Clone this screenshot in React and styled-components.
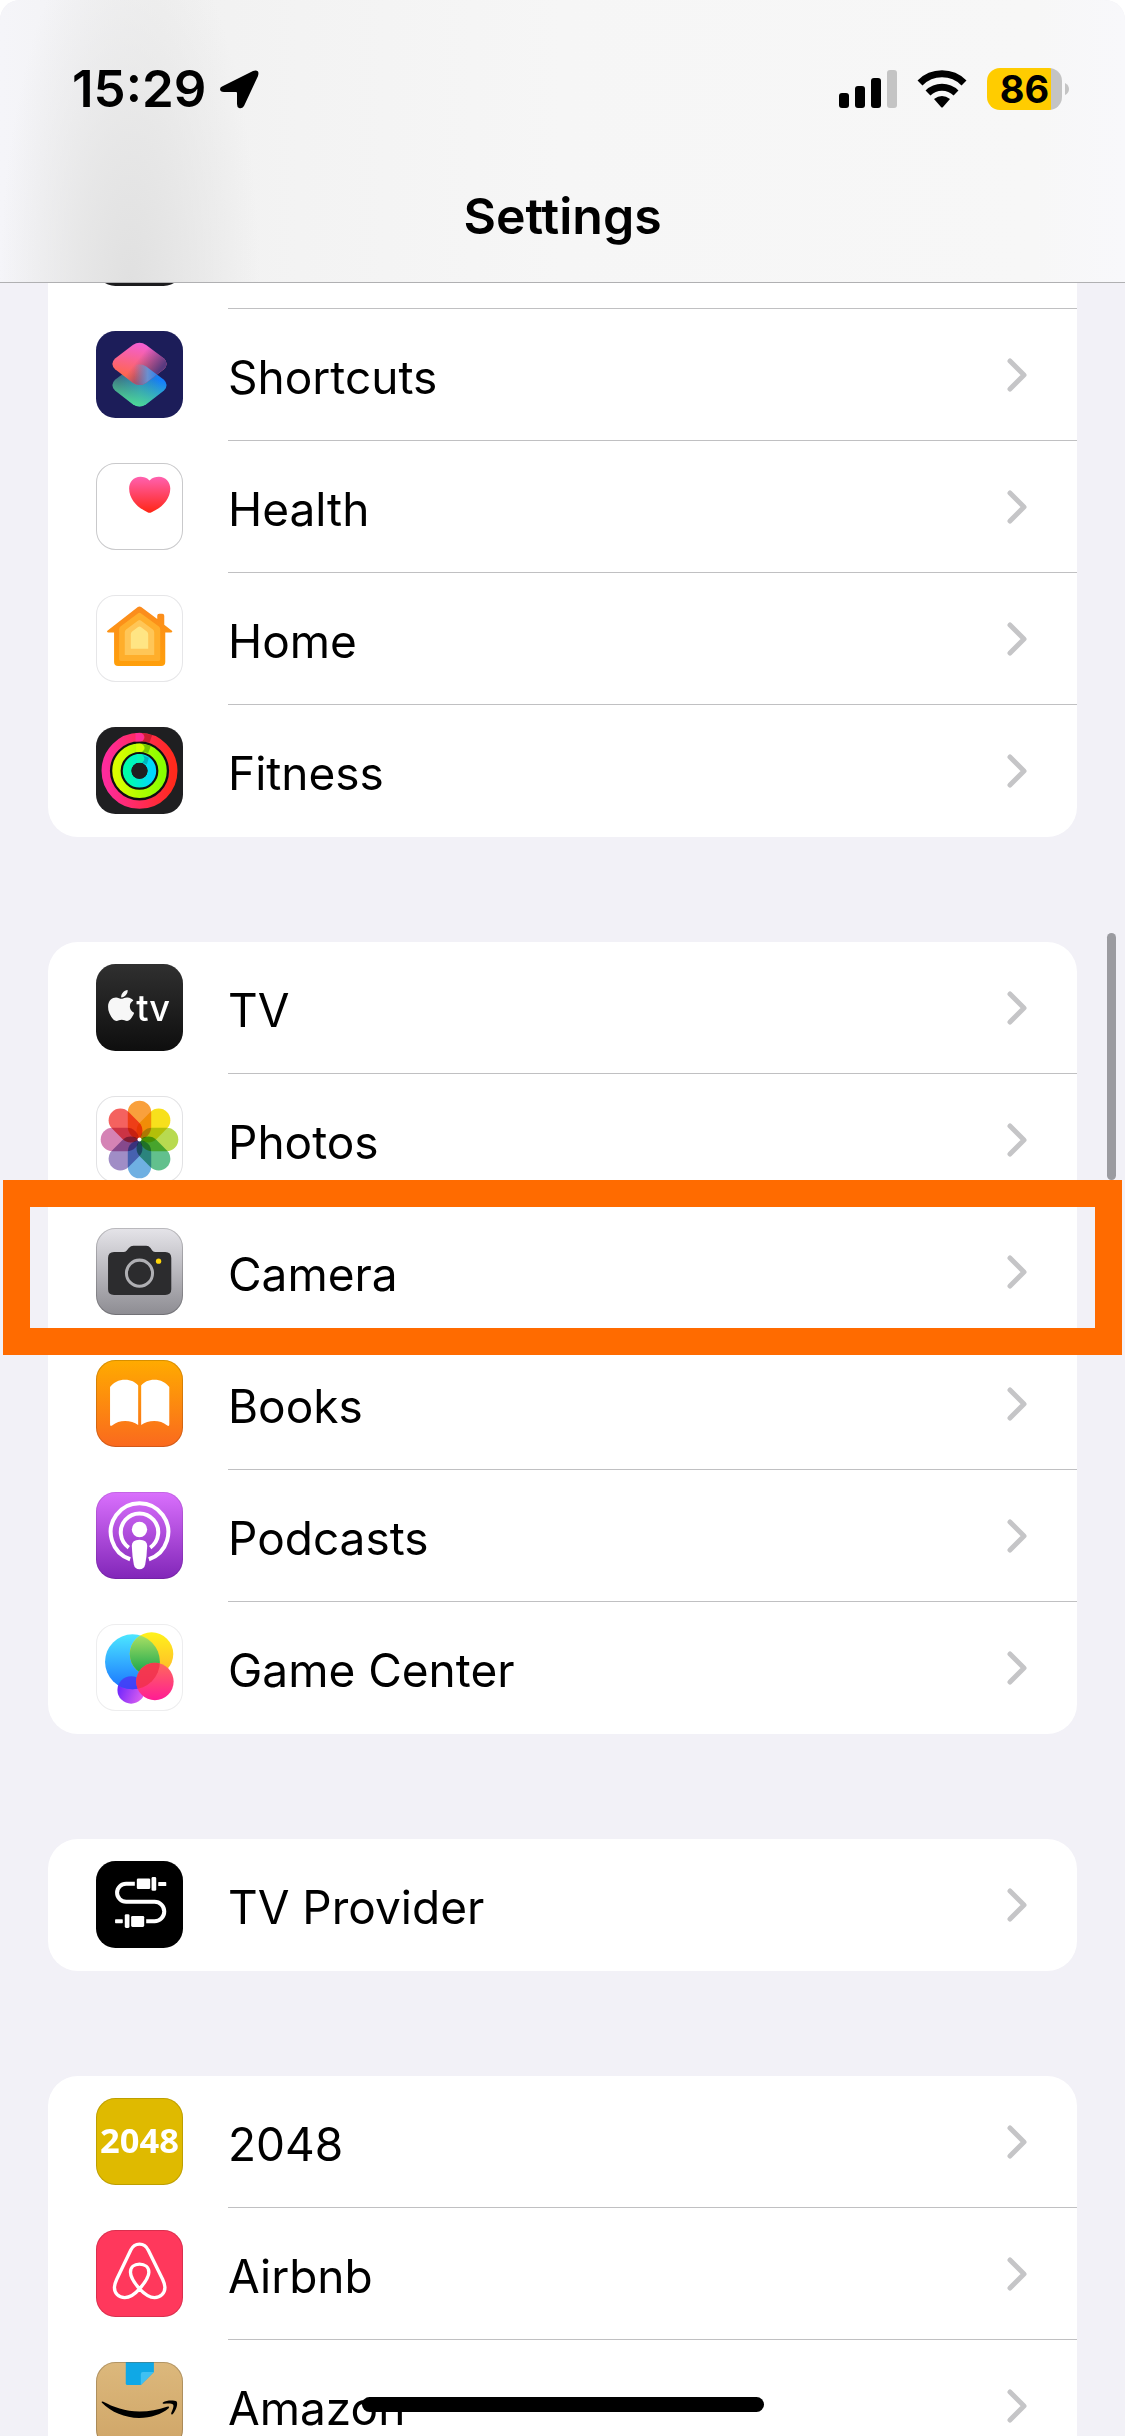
import React from 'react'
import styled, { createGlobalStyle } from 'styled-components'
import { FaApple } from 'react-icons/fa'

const AppIcon = styled.svg`
    width: 87px;
    height: 87px;
    margin-bottom: 1px;
    flex: none;`

const TileText = styled.text`
    fill: #ffffff;
    font-family: ${(props) => (props.$humanist ? '"Open Sans", "Noto Sans"' : 'Inter')}, sans-serif;`

const Petals = styled.g`
    isolation: isolate;

    rect {
        mix-blend-mode: multiply;
    }`

const photoPetals = ['#f9a03c', '#f7e01c', '#b8da50', '#62c08d', '#6fb0e2', '#a08dc6', '#d583b5', '#f4625f']

function Tile({ fill, edge, children }) {
    return (
        <AppIcon viewBox="0 0 260 260" aria-hidden="true">
            <rect width="260" height="260" rx="58" fill={fill} />
            {children}
            {edge && <rect x="1.5" y="1.5" width="257" height="257" rx="57" fill="none" stroke={edge} strokeWidth="3" />}
        </AppIcon>
    )
}

function Grad({ id, from, to, x2 = 0, y2 = 1 }) {
    return (
        <linearGradient id={id} x1="0" y1="0" x2={x2} y2={y2}>
            <stop offset="0" stopColor={from} />
            <stop offset="1" stopColor={to} />
        </linearGradient>
    )
}

const diamond = 'M110 42Q130 28 150 42L203 82Q219 98 203 114L150 155Q130 168 110 155L57 114Q41 98 57 82Z'

const icons = {
    dark: <Tile fill="#1c1c1e" />,
    shortcuts: (
        <Tile fill="#1c1d59">
            <defs>
                <linearGradient id="scLow" x1="0.1" y1="0.3" x2="0.9" y2="0.3">
                    <stop offset="0" stopColor="#38597f" />
                    <stop offset="0.5" stopColor="#2a82c0" />
                    <stop offset="1" stopColor="#147efb" />
                </linearGradient>
                <linearGradient id="scGreen" x1="0.4" y1="1" x2="0.6" y2="0.3">
                    <stop offset="0" stopColor="#4fdc95" />
                    <stop offset="1" stopColor="#4fdc95" stopOpacity="0" />
                </linearGradient>
                <linearGradient id="scTop" x1="0.35" y1="0.8" x2="0.55" y2="0.05">
                    <stop offset="0" stopColor="#ff6650" />
                    <stop offset="1" stopColor="#f35fd0" />
                </linearGradient>
                <linearGradient id="scFade" x1="0.5" y1="0.35" x2="0.9" y2="0.6">
                    <stop offset="0" stopColor="#5a3a80" stopOpacity="0" />
                    <stop offset="1" stopColor="#5a3a80" />
                </linearGradient>
                <linearGradient id="scBlue" x1="0.4" y1="0.5" x2="0.9" y2="0.5">
                    <stop offset="0" stopColor="#8f8fb4" stopOpacity="0" />
                    <stop offset="0.5" stopColor="#6a90d0" />
                    <stop offset="1" stopColor="#147efb" />
                </linearGradient>
                <clipPath id="scClip"><path d={diamond} transform="translate(0 64)" /></clipPath>
            </defs>
            <path d={diamond} transform="translate(0 64)" fill="url(#scLow)" />
            <path d={diamond} transform="translate(0 64)" fill="url(#scGreen)" />
            <path d={diamond} fill="url(#scTop)" />
            <path d={diamond} fill="url(#scFade)" />
            <g clipPath="url(#scClip)"><path d={diamond} fill="url(#scBlue)" /></g>
        </Tile>
    ),
    health: (
        <Tile fill="#fff" edge="#c9c9cb">
            <defs><Grad id="heart" from="#ff61b0" to="#ff2616" /></defs>
            <path d="M160 52C151 43 142 41 133 41C112 41 99 57 99 76C99 110 127 135 154 147Q160 150 166 147C194 135 222 110 222 76C222 57 208 41 188 41C178 41 169 43 160 52Z" fill="url(#heart)" />
        </Tile>
    ),
    home: (
        <Tile fill="#fff" edge="#e6e6e8">
            <defs><Grad id="house" from="#fb8b1e" to="#ff9f0a" /></defs>
            <path d="M125 36Q130 32 135 36L183 72V62Q183 56 189 56H198Q204 56 204 62V89L227 107Q230 112 224 112H207V200Q207 212 195 212H66Q54 212 54 200V112H37Q31 112 34 107Z" fill="url(#house)" />
            <path d="M125 55Q130 51 135 55L188 94Q192 97 192 102V192Q192 197 187 197H74Q69 197 69 192V102Q69 97 73 94Z" fill="#ffae2b" />
            <path d="M126 76Q130 73 134 76L170 103Q174 106 174 111V179H86V111Q86 106 90 103Z" fill="#ffc657" />
            <path d="M126 96Q130 93 134 96L152 109Q156 112 156 117V161H104V117Q104 112 108 109Z" fill="#ffe584" />
        </Tile>
    ),
    fitness: (
        <Tile fill="#1f1f21">
            <defs>
                <Grad id="move" from="#ff2b9c" to="#ff2a1c" x2="1" y2="0" />
                <Grad id="exercise" from="#dcff00" to="#88ff00" x2="1" y2="0" />
                <Grad id="stand" from="#00ffa8" to="#00d8ff" x2="1" y2="0" />
            </defs>
            <circle cx="130" cy="131" r="88" fill="#0f0f10" />
            <circle cx="130" cy="131" r="101" fill="none" stroke="url(#move)" strokeWidth="25" />
            <circle cx="130" cy="131" r="69" fill="none" stroke="url(#exercise)" strokeWidth="25" />
            <circle cx="130" cy="131" r="37" fill="none" stroke="url(#stand)" strokeWidth="26" />
            <circle cx="130" cy="131" r="24" fill="#1f1f21" />
            <path d="M136 18Q154 30 138 43L160 46L168 24Z" fill="#8c0f10" opacity="0.45" />
            <path d="M136 50Q154 62 138 74L156 78L164 56Z" fill="#3a7a00" opacity="0.45" />
            <path d="M136 83Q152 94 138 106L152 112L158 92Z" fill="#00707c" opacity="0.4" />
            <path d="M118 18H131A12 12 0 0 1 131 43H118Z" fill="#ff2d92" />
            <path d="M120 50H131A12 12 0 0 1 131 75H120Z" fill="#d4ff00" />
            <path d="M122 81H131A12 12 0 0 1 131 107H122Z" fill="#08f7b4" />
        </Tile>
    ),
    tv: (
        <Tile fill="url(#tvBg)">
            <defs><Grad id="tvBg" from="#303030" to="#0e0e0e" /></defs>
            <FaApple x="22" y="71" size="106" color="#f7f7f7" />
            <TileText x="120" y="170" fontSize="108" fontWeight="500">tv</TileText>
        </Tile>
    ),
    photos: (
        <Tile fill="#fff" edge="#e2e2e4">
            <Petals>
                {photoPetals.map((color, i) => (
                    <rect key={color} x="95" y="14" width="70" height="114" rx="35" fill={color} transform={`rotate(${i * 45} 130 130)`} />
                ))}
            </Petals>
            <circle cx="130" cy="130" r="6" fill="#fff" />
        </Tile>
    ),
    camera: (
        <Tile fill="url(#camBg)" edge="#00000030">
            <defs><Grad id="camBg" from="#e5e4e9" to="#8d8c92" /></defs>
            <path d="M36 90Q36 72 54 72H82Q88 72 92 67L98 60Q104 53 112 53H150Q158 53 163 60L168 67Q172 72 178 72H207Q225 72 225 90V183Q225 200 207 200H54Q36 200 36 183Z" fill="#2c2c2e" />
            <circle cx="130" cy="135" r="39" fill="none" stroke="#afafb3" strokeWidth="9" />
            <circle cx="187" cy="99" r="8" fill="#ffd60a" />
        </Tile>
    ),
    books: (
        <Tile fill="url(#bookBg)" edge="#00000028">
            <defs><Grad id="bookBg" from="#ffab00" to="#fa691e" /></defs>
            <path d="M42 81C52 67 68 59 87 59C104 59 118 66 126 76V194C115 186 102 182 87 182C72 182 60 186 48 196Q42 199 42 193Z" fill="#fff" />
            <path d="M219 81C209 67 193 59 174 59C157 59 143 66 135 76V194C146 186 159 182 174 182C189 182 201 186 213 196Q219 199 219 193Z" fill="#fff" />
        </Tile>
    ),
    podcasts: (
        <Tile fill="url(#podBg)" edge="#00000018">
            <defs><Grad id="podBg" from="#da70fd" to="#8126b8" /></defs>
            <path d="M102 201A86 86 0 1 1 158 201" fill="none" stroke="#fff" strokeWidth="12" />
            <path d="M98 166A56 56 0 1 1 162 166" fill="none" stroke="#fff" strokeWidth="12" />
            <circle cx="130" cy="112" r="23" fill="#fff" />
            <path d="M107 161Q107 143 130 143Q153 143 153 161Q152 192 147 217Q144 231 130 231Q116 231 113 217Q108 192 107 161Z" fill="#fff" />
        </Tile>
    ),
    gameCenter: (
        <Tile fill="#fff" edge="#ededee">
            <defs>
                <Grad id="gcBlue" from="#4ce6ff" to="#1a74ff" />
                <Grad id="gcYellow" from="#fff21c" to="#ffb52a" />
                <Grad id="gcPink" from="#ff6a5a" to="#ff1c95" />
                <Grad id="gcPurple" from="#5a1cff" to="#d65bf0" x2="1" y2="0.4" />
                <Grad id="gcGreen" from="#b4e465" to="#0fa24c" />
                <clipPath id="gcClip"><circle cx="109" cy="113" r="82" /></clipPath>
            </defs>
            <circle cx="105" cy="197" r="41" fill="url(#gcPurple)" />
            <circle cx="109" cy="113" r="82" fill="url(#gcBlue)" />
            <g clipPath="url(#gcClip)"><circle cx="105" cy="197" r="41" fill="#4a35f5" opacity="0.8" /></g>
            <circle cx="166" cy="90" r="65" fill="url(#gcYellow)" />
            <g clipPath="url(#gcClip)"><circle cx="166" cy="90" r="65" fill="url(#gcGreen)" /></g>
            <circle cx="176" cy="172" r="56" fill="url(#gcPink)" />
            <g clipPath="url(#gcClip)"><circle cx="176" cy="172" r="56" fill="#f0304a" opacity="0.8" /></g>
        </Tile>
    ),
    provider: (
        <Tile fill="#000">
            <path d="M116 68H90A27 27 0 0 0 90 122H175A29 29 0 0 1 175 180H150" fill="none" stroke="#fff" strokeWidth="12" />
            <g fill="#fff">
                <rect x="122" y="52" width="40" height="32" rx="4" />
                <rect x="166" y="48" width="14" height="41" rx="4" />
                <rect x="186" y="63" width="24" height="12" rx="2" />
                <rect x="57" y="174" width="23" height="12" rx="2" />
                <rect x="86" y="159" width="14" height="41" rx="4" />
                <rect x="105" y="164" width="39" height="33" rx="4" />
            </g>
        </Tile>
    ),
    game2048: (
        <Tile fill="#dfba00" edge="#00000025">
            <TileText x="130" y="165" fontSize="103" fontWeight="700" textAnchor="middle" $humanist>2048</TileText>
        </Tile>
    ),
    airbnb: (
        <Tile fill="#ff385c" edge="#00000025">
            <path
                d="M130 176C112 155 103 141 103 126C103 111 114 102 130 102C146 102 158 111 158 126C158 141 148 155 130 176C116 192 102 202 86 202C67 202 55 189 55 171C55 163 57 158 62 147L104 60C110 47 118 42 130 42C142 42 150 47 156 60L199 147C204 158 206 163 206 171C206 189 193 202 175 202C158 202 145 192 130 176Z"
                fill="none" stroke="#fff" strokeWidth="10" strokeLinejoin="round"
            />
        </Tile>
    ),
    amazon: (
        <Tile fill="url(#amzBg)" edge="#00000030">
            <defs><Grad id="amzBg" from="#dcb87c" to="#cfa567" /></defs>
            <path d="M89 1H173V30L134 69H94Q89 69 89 64Z" fill="#0fa8e6" />
            <path d="M173 30L134 69V36Q134 30 140 30Z" fill="#3fc0f2" />
            <path d="M17 121Q16 117 22 119C50 134 88 148 130 148C160 148 186 143 212 134Q222 131 217 138C196 156 164 167 129 167C86 167 46 150 17 121Z" fill="#000" />
            <path d="M200 121C212 113 234 114 241 118C246 126 238 147 229 156Q223 159 225 152C229 143 234 131 230 127C226 123 213 124 204 125Q197 125 200 121Z" fill="#000" />
        </Tile>
    ),
}

const groups = [
    [
        { icon: 'dark', label: '' },
        { icon: 'shortcuts', label: 'Shortcuts' },
        { icon: 'health', label: 'Health' },
        { icon: 'home', label: 'Home' },
        { icon: 'fitness', label: 'Fitness' },
    ],
    [
        { icon: 'tv', label: 'TV' },
        { icon: 'photos', label: 'Photos' },
        { icon: 'camera', label: 'Camera', marked: true },
        { icon: 'books', label: 'Books' },
        { icon: 'podcasts', label: 'Podcasts' },
        { icon: 'gameCenter', label: 'Game Center' },
    ],
    [{ icon: 'provider', label: 'TV Provider' }],
    [
        { icon: 'game2048', label: '2048' },
        { icon: 'airbnb', label: 'Airbnb' },
        { icon: 'amazon', label: 'Amazon' },
    ],
]

function StatusBar() {
    return (
        <Status>
            <Clock>
                <time>15:29</time>
                <svg width="39" height="39" viewBox="0 0 39 39" aria-hidden="true">
                    <path d="M3 16L33 1Q40 -1 38 6L24 36Q22 39 19 38Q17 37 17 34V23Q17 22 16 22H4Q0 22 0 19Q0 17 3 16Z" fill="#000" />
                </svg>
            </Clock>
            <Indicators>
                <svg width="58" height="38" viewBox="0 0 58 38" aria-hidden="true">
                    <rect x="0" y="23" width="10" height="15" rx="3" />
                    <rect x="16" y="16" width="10" height="22" rx="3" />
                    <rect x="32" y="8" width="10" height="30" rx="3" />
                    <rect x="48" y="0" width="10" height="38" rx="3" fill="#c4c4c4" />
                </svg>
                <svg width="50" height="38" viewBox="0 0 50 38" aria-hidden="true">
                    <path d="M3 13A31 31 0 0 1 47 13" fill="none" stroke="#000" strokeWidth="7" />
                    <path d="M11 23A20 20 0 0 1 39 23" fill="none" stroke="#000" strokeWidth="7" />
                    <path d="M17 29Q25 23 33 29L26 37Q25 38 24 37Z" />
                </svg>
                <Battery>
                    <Charge>86</Charge>
                    <svg width="4" height="12" viewBox="0 0 4 12" aria-hidden="true">
                        <path d="M0 0Q4 2 4 6Q4 10 0 12Z" fill="#c4c4c4" />
                    </svg>
                </Battery>
            </Indicators>
        </Status>
    )
}

export default function App() {
    return (
        <Screen>
            <GlobalStyle />
            <Header>
                <StatusBar />
                <Title>Settings</Title>
            </Header>
            <List>
                {groups.map((rows, g) => (
                    <Group key={g}>
                        {rows.map((row) => (
                            <Item key={row.icon}>
                                <Row href="#">
                                    {icons[row.icon]}
                                    <Line>
                                        <Label>{row.label}</Label>
                                        <svg width="20" height="34" viewBox="0 0 20 34" aria-hidden="true">
                                            <path d="M3 3L17 17L3 31" fill="none" stroke="#c5c5c7" strokeWidth="5" strokeLinecap="round" strokeLinejoin="round" />
                                        </svg>
                                    </Line>
                                </Row>
                                {row.marked && <Marker />}
                            </Item>
                        ))}
                    </Group>
                ))}
            </List>
            <ScrollThumb />
            <HomeBar />
        </Screen>
    )
}

const GlobalStyle = createGlobalStyle`
    * {
        box-sizing: border-box;
    }
    body {
        margin: 0;
        background: #ffffff;
        color: #000000;
        font-family: Inter, Roboto, sans-serif;
    }`

const Screen = styled.div`
    position: relative;
    height: 100vh;
    overflow: hidden;
    background: #f2f1f7;
    border-radius: 20px 20px 0 0;`

const Header = styled.header`
    position: sticky;
    top: 0;
    z-index: 2;
    border-bottom: 1px solid #b0b0b2;
    background:
        radial-gradient(ellipse 130px 380px at 130px 290px, #e0e0e0 0%, rgba(228, 228, 228, 0.8) 40%, rgba(241, 241, 241, 0) 100%),
        linear-gradient(to right, #f5f5f9 0, #f1f1f1 160px, #f3f3f3 300px, #f6f6f6 560px, #f7f7f7 92%, #f8f8fb 100%);`

const Status = styled.div`
    display: flex;
    align-items: center;
    justify-content: space-between;
    padding: 60px 56px 0 72px;`

const Clock = styled.div`
    display: flex;
    align-items: center;
    gap: 14px;
    line-height: 58px;
    font-size: 51px;
    font-weight: 600;`

const Indicators = styled.div`
    display: flex;
    align-items: center;
    gap: 20px;`

const Battery = styled.div`
    display: flex;
    align-items: center;
    gap: 3px;`

const Charge = styled.span`
    width: 75px;
    height: 42px;
    border-radius: 13px;
    background: linear-gradient(to right, #ffcc00 86%, #c4c4c4 86%);
    text-align: center;
    font-size: 38px;
    line-height: 43px;
    font-weight: 700;`

const Title = styled.h1`
    margin: 0;
    padding: 68px 0 36px;
    text-align: center;
    font-size: 50px;
    line-height: 60px;
    font-weight: 600;`

const List = styled.main`
    display: flex;
    flex-direction: column;
    gap: 105px;
    margin-top: -106px;
    padding: 0 48px;`

const Group = styled.ul`
    margin: 0;
    padding: 0;
    list-style: none;
    background: #ffffff;
    border-radius: 30px;`

const Item = styled.li`
    position: relative;`

const Line = styled.span`
    flex: 1;
    height: 132px;
    display: flex;
    align-items: center;
    justify-content: space-between;
    padding-right: 50px;
    border-bottom: 1px solid #c0c0c2;

    ${Item}:last-child & {
        border-bottom-color: transparent;
    }`

const Row = styled.a`
    display: flex;
    align-items: center;
    gap: 45px;
    padding-left: 48px;
    color: inherit;
    text-decoration: none;`

const Label = styled.span`
    font-size: 46px;
    line-height: 60px;
    padding-top: 4px;`

const Marker = styled.div`
    position: absolute;
    z-index: 1;
    top: -26px;
    right: -45px;
    bottom: -17px;
    left: -45px;
    border: 27px solid #ff6b00;
    pointer-events: none;`

const ScrollThumb = styled.div`
    position: absolute;
    top: 933px;
    right: 9px;
    width: 9px;
    height: 247px;
    border-radius: 5px;
    background: #9b9ba0;`

const HomeBar = styled.div`
    position: absolute;
    bottom: 24px;
    left: 50%;
    width: 402px;
    height: 15px;
    border-radius: 8px;
    background: #000000;
    transform: translateX(-50%);`
